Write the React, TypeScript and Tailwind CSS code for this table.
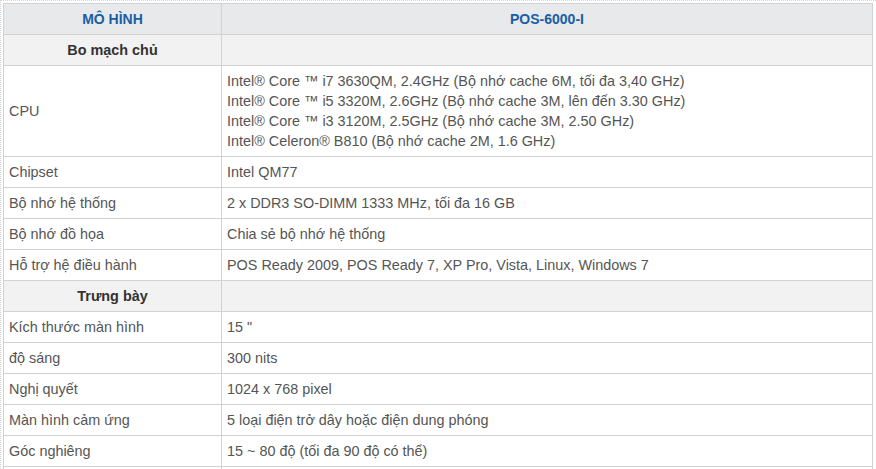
const rows: { label: string; value: string[]; section?: boolean }[] = [
  { label: "Bo mạch chủ", value: [], section: true },
  {
    label: "CPU",
    value: [
      "Intel® Core ™ i7 3630QM, 2.4GHz (Bộ nhớ cache 6M, tối đa 3,40 GHz)",
      "Intel® Core ™ i5 3320M, 2.6GHz (Bộ nhớ cache 3M, lên đến 3.30 GHz)",
      "Intel® Core ™ i3 3120M, 2.5GHz (Bộ nhớ cache 3M, 2.50 GHz)",
      "Intel® Celeron® B810 (Bộ nhớ cache 2M, 1.6 GHz)",
    ],
  },
  { label: "Chipset", value: ["Intel QM77"] },
  { label: "Bộ nhớ hệ thống", value: ["2 x DDR3 SO-DIMM 1333 MHz, tối đa 16 GB"] },
  { label: "Bộ nhớ đồ họa", value: ["Chia sẻ bộ nhớ hệ thống"] },
  { label: "Hỗ trợ hệ điều hành", value: ["POS Ready 2009, POS Ready 7, XP Pro, Vista, Linux, Windows 7"] },
  { label: "Trưng bày", value: [], section: true },
  { label: "Kích thước màn hình", value: ['15 "'] },
  { label: "độ sáng", value: ["300 nits"] },
  { label: "Nghị quyết", value: ["1024 x 768 pixel"] },
  { label: "Màn hình cảm ứng", value: ["5 loại điện trở dây hoặc điện dung phóng"] },
  { label: "Góc nghiêng", value: ["15 ~ 80 độ (tối đa 90 độ có thể)"] },
  { label: "", value: [] },
];

export default function App() {
  return (
    <div
      className="w-[876px] h-[469px] overflow-hidden bg-white pl-[2px] pt-[2px] border-l border-t border-dotted border-[#d4d4d4]"
      style={{ fontFamily: '"Liberation Sans", Arial, sans-serif' }}
    >
      <table className="w-[870px] border-collapse text-[14.4px] leading-[20px] text-[#555]">
        <colgroup>
          <col className="w-[218px]" />
          <col />
        </colgroup>
        <thead>
          <tr className="h-[31px] bg-[#e8e9ea]">
            <th className="border border-[#d2d2d2] text-center text-[14px] font-bold text-[#1a5ea6]">
              MÔ HÌNH
            </th>
            <th className="border border-[#d2d2d2] text-center text-[14px] font-bold text-[#1a5ea6]">
              POS-6000-I
            </th>
          </tr>
        </thead>
        <tbody>
          {rows.map((r, i) =>
            r.section ? (
              <tr key={i} className="h-[31px] bg-[#f2f2f2]">
                <td className="border border-[#d2d2d2] text-center font-bold text-[#333]">{r.label}</td>
                <td className="border border-[#d2d2d2]"></td>
              </tr>
            ) : (
              <tr key={i} className="h-[31px]">
                <td className="border border-[#d2d2d2] px-[5px] py-[5px] align-middle">{r.label}</td>
                <td className="border border-[#d2d2d2] px-[5px] py-[5px] align-middle">
                  {r.value.map((v, j) => (
                    <div key={j}>{v}</div>
                  ))}
                </td>
              </tr>
            )
          )}
        </tbody>
      </table>
    </div>
  );
}
